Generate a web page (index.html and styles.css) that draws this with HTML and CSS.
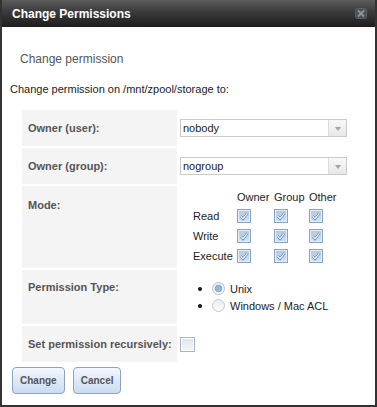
FILE: index.html
```html
<!DOCTYPE html>
<html lang="en">
<head>
<meta charset="UTF-8" />
<title>Change Permissions</title>
<link rel="stylesheet" href="styles.css">
</head>
<body>
<svg class="defs" width="0" height="0">
    <defs>
        <linearGradient id="cbfill" x1="0" y1="0" x2="0" y2="1">
            <stop offset="0" stop-color="#aec6e2"/>
            <stop offset="1" stop-color="#d7e4f3"/>
        </linearGradient>
        <linearGradient id="boxfill" x1="0" y1="0" x2="0" y2="1">
            <stop offset="0" stop-color="#dce3ec"/>
            <stop offset="1" stop-color="#f5f8fb"/>
        </linearGradient>
        <linearGradient id="rfill" x1="0" y1="0" x2="0" y2="1">
            <stop offset="0" stop-color="#e9edf2"/>
            <stop offset="1" stop-color="#fafbfc"/>
        </linearGradient>
    </defs>
</svg>
<div class="dialog">
    <div class="titlebar">
        <span class="title">Change Permissions</span>
        <svg class="close" width="12" height="11" viewBox="0 0 12 11">
            <rect x=".5" y=".5" width="11" height="10" rx="2" fill="#4b5056" stroke="#5a5f66"/>
            <path d="M3 2.5l6 6M9 2.5l-6 6" stroke="#8d949c" stroke-width="1.8"/>
        </svg>
    </div>
    <div class="content">
        <h3 class="heading">Change permission</h3>
        <p class="intro">Change permission on /mnt/zpool/storage to:</p>
        <table class="form">
            <tr class="short">
                <th>Owner (user):</th>
                <td><div class="select"><span class="value">nobody</span><span class="arrow"></span></div></td>
            </tr>
            <tr class="short">
                <th>Owner (group):</th>
                <td><div class="select"><span class="value">nogroup</span><span class="arrow"></span></div></td>
            </tr>
            <tr>
                <th class="top">Mode:</th>
                <td class="mode-cell">
                    <div class="mode">
                        <span></span><span>Owner</span><span>Group</span><span>Other</span>
                        <span>Read</span>
                        <svg class="chk" viewBox="0 0 14 14"><use href="#tick"/></svg>
                        <svg class="chk" viewBox="0 0 14 14"><use href="#tick"/></svg>
                        <svg class="chk" viewBox="0 0 14 14"><use href="#tick"/></svg>
                        <span>Write</span>
                        <svg class="chk" viewBox="0 0 14 14"><use href="#tick"/></svg>
                        <svg class="chk" viewBox="0 0 14 14"><use href="#tick"/></svg>
                        <svg class="chk" viewBox="0 0 14 14"><use href="#tick"/></svg>
                        <span>Execute</span>
                        <svg class="chk" viewBox="0 0 14 14">
                            <g id="tick">
                                <rect x=".5" y=".5" width="13" height="13" fill="url(#cbfill)" stroke="#8aa3bf"/>
                                <rect x="1.5" y="1.5" width="11" height="11" fill="none" stroke="#e4edf7"/>
                                <path d="M3.6 7.2l2.4 2.5 4.4-5.4" fill="none" stroke="#5f88b6" stroke-width="2.6"/>
                                <path d="M3.6 7.2l2.4 2.5 4.4-5.4" fill="none" stroke="#fff" stroke-width="1.1"/>
                            </g>
                        </svg>
                        <svg class="chk" viewBox="0 0 14 14"><use href="#tick"/></svg>
                        <svg class="chk" viewBox="0 0 14 14"><use href="#tick"/></svg>
                    </div>
                </td>
            </tr>
            <tr>
                <th class="top perm">Permission Type:</th>
                <td>
                    <ul class="radios">
                        <li>
                            <svg class="radio" width="13" height="13" viewBox="0 0 13 13">
                                <circle cx="6.5" cy="6.5" r="6" fill="url(#rfill)" stroke="#b7bec8"/>
                                <circle cx="6.5" cy="6.5" r="3.3" fill="#93b8de" stroke="#6f9ac7" stroke-width=".8"/>
                            </svg>
                            <span>Unix</span>
                        </li>
                        <li>
                            <svg class="radio" width="13" height="13" viewBox="0 0 13 13">
                                <circle cx="6.5" cy="6.5" r="6" fill="url(#rfill)" stroke="#c3c9d1"/>
                            </svg>
                            <span>Windows / Mac ACL</span>
                        </li>
                    </ul>
                </td>
            </tr>
            <tr class="short">
                <th>Set permission recursively:</th>
                <td>
                    <svg class="box" width="15" height="15" viewBox="0 0 15 15">
                        <rect x=".5" y=".5" width="14" height="14" fill="url(#boxfill)" stroke="#aab3bf"/>
                        <rect x="1.5" y="1.5" width="12" height="12" fill="none" stroke="#fff"/>
                    </svg>
                </td>
            </tr>
        </table>
        <div class="actions">
            <button type="button" class="btn">Change</button>
            <button type="button" class="btn">Cancel</button>
        </div>
    </div>
</div>
</body>
</html>
```

FILE: styles.css
```css
  body {
      margin: 0;
      font-family: "Liberation Sans", Arial, sans-serif;
      font-size: 11px;
      color: #222;
      background: #fff;
  }
  .defs {
      display: block;
      width: 0;
      height: 0;
  }
  .dialog {
      height: 407px;
      box-sizing: border-box;
      border: 2px solid #333;
      border-top: 0;
      display: flex;
      flex-direction: column;
  }
  .titlebar {
      height: 27px;
      flex: none;
      display: flex;
      align-items: center;
      justify-content: space-between;
      padding: 0 8px 0 10px;
      background: linear-gradient(#5c5c5c, #3a3a3a 45%, #1d1d1d);
      color: #fff;
      font-size: 12px;
      font-weight: bold;
  }
  .close {
      display: block;
  }
  .content {
      padding: 0 8px;
  }
  .heading {
      margin: 24px 0 0 10px;
      font-size: 12px;
      line-height: 16px;
      font-weight: normal;
      color: #555;
  }
  .intro {
      margin: 15px 0 0;
      line-height: 14px;
  }
  .form {
      margin: 12px 0 0 10px;
      border-spacing: 2px;
      width: 332px;
      table-layout: fixed;
  }
  .form th {
      width: 143px;
      padding: 0 6px;
      background: #f4f4f4;
      text-align: left;
      font-weight: bold;
      color: #555;
      line-height: 14px;
      white-space: nowrap;
  }
  .form td {
      padding: 0;
      vertical-align: middle;
  }
  .form tr.short {
      height: 36px;
  }
  .form th.top {
      vertical-align: top;
      padding-top: 12px;
  }
  .form th.perm {
      padding-top: 10px;
  }
  .select {
      margin-left: 1px;
      width: 167px;
      height: 18px;
      box-sizing: border-box;
      border: 1px solid #cacaca;
      display: flex;
      align-items: center;
      background: #fff;
  }
  .select .value {
      flex: 1;
      padding-left: 2px;
  }
  .select .arrow {
      width: 17px;
      height: 100%;
      border-left: 1px solid #ddd;
      background: linear-gradient(#f8f8f8, #e8e8e8);
      display: flex;
      align-items: center;
      justify-content: center;
  }
  .select .arrow::after {
      content: '';
      border-left: 3px solid transparent;
      border-right: 3px solid transparent;
      border-top: 4px solid #a3a3a3;
      margin-top: 1px;
  }
  .form td.mode-cell {
      vertical-align: top;
      padding: 1px 0 2px;
  }
  .mode {
      display: grid;
      grid-template-columns: 44px 37px 35px auto;
      grid-template-rows: 19px 20px 20px 20px;
      align-items: center;
      margin-left: 14px;
  }
  .chk {
      display: block;
      width: 14px;
      height: 14px;
  }
  .radios {
      list-style: none;
      margin: 0;
      padding: 10px 0 10px 19px;
  }
  .radios li {
      display: flex;
      align-items: center;
      height: 17px;
  }
  .radios li::before {
      content: '';
      width: 4px;
      height: 4px;
      border-radius: 50%;
      background: #111;
      margin-right: 10px;
  }
  .radio {
      display: block;
      margin-right: 5px;
  }
  .box {
      display: block;
      margin-left: 1px;
  }
  .actions {
      display: flex;
      gap: 8px;
      margin-top: 3px;
      padding-left: 2px;
  }
  .btn {
      height: 27px;
      padding: 0 7px;
      border: 1px solid #8ea4bd;
      border-radius: 4px;
      background: linear-gradient(#f2f7fd, #cadcf1);
      font-family: "Liberation Sans", Arial, sans-serif;
      font-size: 10px;
      font-weight: bold;
      color: #555;
      cursor: pointer;
  }
```
